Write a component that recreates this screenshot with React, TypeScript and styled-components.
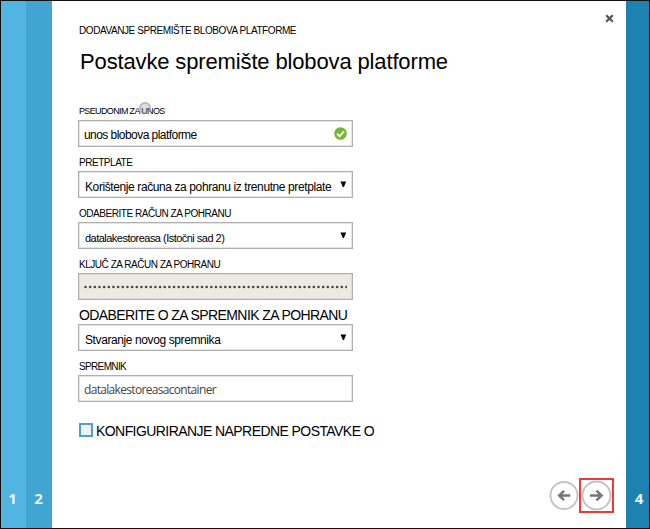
import React from "react";
import styled, { createGlobalStyle } from "styled-components";

const GlobalStyle = createGlobalStyle`
  * { box-sizing: border-box; }
  body { margin: 0; background: #fff; color: #000; font-family: "Liberation Sans", Arial, sans-serif; }
`;

const Dialog = styled.div`
  display: flex;
  width: 650px;
  height: 529px;
  border: 1px solid #111;
  overflow: hidden;
  background: #fff;
`;

const StepRail = styled.div<{ $width: number; $color: string; $shift?: number }>`
  display: flex;
  flex: none;
  align-items: flex-end;
  justify-content: center;
  width: ${(p) => p.$width}px;
  padding: 0 ${(p) => Math.max(0, -(p.$shift ?? 0))}px 19px ${(p) => Math.max(0, p.$shift ?? 0)}px;
  background: ${(p) => p.$color};
  color: #e9f6fc;
  font: bold 15px/22px "Open Sans", sans-serif;
`;

const Content = styled.main`
  position: relative;
  display: flex;
  flex: 1;
  flex-direction: column;
  padding: 23px 0 0 26px;
`;

const CloseButton = styled.button`
  position: absolute;
  top: 13px;
  right: 12px;
  display: flex;
  padding: 0;
  border: 0;
  background: none;
`;

const Eyebrow = styled.div`
  height: 14px;
  padding-left: 1px;
  font-size: 10px;
  letter-spacing: -0.42px;
  line-height: 14px;
  white-space: nowrap;
`;

const Title = styled.h1`
  margin: 10px 0 0 2px;
  height: 28px;
  font-size: 22px;
  font-weight: 400;
  letter-spacing: -0.14px;
  line-height: 28px;
  white-space: nowrap;
`;

const Form = styled.form`
  display: flex;
  flex-direction: column;
  margin-top: 20px;
`;

const Field = styled.div`
  display: flex;
  flex-direction: column;
  width: 275px;
  height: 51px;
`;

const Label = styled.label<{ $size?: number; $spacing?: number; $lift?: number }>`
  position: relative;
  display: flex;
  align-items: flex-end;
  height: 24px;
  padding: 0 0 ${(p) => p.$lift ?? 2}px 1px;
  font-size: ${(p) => p.$size ?? 10}px;
  letter-spacing: ${(p) => p.$spacing ?? -0.46}px;
  line-height: 12px;
  white-space: nowrap;
`;

const HelpMark = styled.span`
  position: absolute;
  left: 61px;
  top: 6px;
  width: 12px;
  height: 12px;
  border: 2px solid rgba(145, 145, 145, 0.5);
  border-radius: 50%;
  background: rgba(150, 150, 150, 0.3);
`;

const Box = styled.div<{ $disabled?: boolean }>`
  display: flex;
  align-items: center;
  justify-content: space-between;
  height: 27px;
  padding: 0 5px 0 5px;
  border: 1px solid #b0b0b0;
  box-shadow: inset 0 0 0 0.5px #ccc;
  background: ${(p) => (p.$disabled ? "#ebebe4" : "#fff")};
`;

const Value = styled.span<{ $size?: number; $spacing?: number; $indent?: number; $drop?: number }>`
  padding: ${(p) => p.$drop ?? 4}px 0 0 ${(p) => p.$indent ?? 1}px;
  font-size: ${(p) => p.$size ?? 12}px;
  letter-spacing: ${(p) => p.$spacing ?? -0.4}px;
  line-height: 16px;
  white-space: nowrap;
`;

const ContainerName = styled.span`
  padding-top: 2px;
  color: #444;
  font: 12px/16px "Open Sans", sans-serif;
  letter-spacing: -0.68px;
`;

const OptionRow = styled.div`
  display: flex;
  align-items: center;
  height: 16px;
  margin-top: 20px;
  font-size: 14px;
  letter-spacing: -0.57px;
  line-height: 16px;
  white-space: nowrap;
`;

const OptionText = styled.span`
  padding-top: 2px;
`;

const Checkbox = styled.span`
  width: 14px;
  height: 14px;
  margin: 0 3px 0 1px;
  border: 2px solid #4f9fcb;
  background: #f1f1f1;
`;

const Pager = styled.nav`
  position: absolute;
  right: 12px;
  bottom: 15px;
  display: flex;
  align-items: center;
`;

const PagerButton = styled.button<{ $highlighted?: boolean }>`
  display: flex;
  align-items: center;
  justify-content: center;
  width: ${(p) => (p.$highlighted ? 35 : 30)}px;
  height: 35px;
  padding: 0;
  border: ${(p) => (p.$highlighted ? "2px solid #ec3b3b" : "0")};
  background: none;
`;

const Arrow = ({ back }: { back?: boolean }) => (
  <svg width="31" height="31" viewBox="0 0 31 31" fill="none">
    <circle cx="15.5" cy="15.5" r="14" stroke="#c4c4c4" strokeWidth="2" />
    <path
      d={back ? "M22 15.5H11M15.6 10.6L10.4 15.5L15.6 20.4" : "M9 15.5H20M15.4 10.6L20.6 15.5L15.4 20.4"}
      stroke="#777"
      strokeWidth="2.5"
    />
  </svg>
);

const Caret = () => (
  <svg width="7" height="7" viewBox="0 0 7 7">
    <path d="M0.5 0.5H6.2L3.9 6H2.8Z" fill="#000" />
  </svg>
);

const Valid = () => (
  <svg width="13" height="13" viewBox="0 0 13 13" fill="none">
    <circle cx="6.5" cy="6.5" r="6.3" fill="#70b92b" />
    <path d="M3.1 6.6L5.6 9.2L10 4.3" stroke="#fff" strokeWidth="2" />
  </svg>
);

const KeyDots = () => (
  <svg width="263" height="4" viewBox="0 0 263 4">
    <path d="M1.5 2H263" stroke="#45454b" strokeWidth="2.6" strokeLinecap="round" strokeDasharray="0.01 4.65" />
  </svg>
);

export default function App() {
  return (
    <>
      <GlobalStyle />
      <Dialog>
        <StepRail $width={25} $color="#52b4e0" $shift={-2}>1</StepRail>
        <StepRail $width={26} $color="#42a4d0" $shift={-1}>2</StepRail>
        <Content>
          <CloseButton aria-label="Zatvori">
            <svg width="9" height="9" viewBox="0 0 9 9">
              <path d="M1.2 1.2L7.8 7.8M7.8 1.2L1.2 7.8" stroke="#555" strokeWidth="2.2" />
            </svg>
          </CloseButton>
          <Eyebrow>DODAVANJE SPREMIŠTE BLOBOVA PLATFORME</Eyebrow>
          <Title>Postavke spremište blobova platforme</Title>
          <Form>
            <Field>
              <Label $size={9} $spacing={-0.64} $lift={3}>
                PSEUDONIM ZA UNOS
                <HelpMark />
              </Label>
              <Box>
                <Value $spacing={-0.55} $indent={0} $drop={3}>unos blobova platforme</Value>
                <Valid />
              </Box>
            </Field>
            <Field>
              <Label>PRETPLATE</Label>
              <Box>
                <Value>Korištenje računa za pohranu iz trenutne pretplate</Value>
                <Caret />
              </Box>
            </Field>
            <Field>
              <Label>ODABERITE RAČUN ZA POHRANU</Label>
              <Box>
                <Value $size={11} $spacing={-0.52}>datalakestoreasa (Istočni sad 2)</Value>
                <Caret />
              </Box>
            </Field>
            <Field>
              <Label>KLJUČ ZA RAČUN ZA POHRANU</Label>
              <Box $disabled>
                <KeyDots />
              </Box>
            </Field>
            <Field>
              <Label $size={14} $spacing={-0.6} $lift={3}>ODABERITE O ZA SPREMNIK ZA POHRANU</Label>
              <Box>
                <Value>Stvaranje novog spremnika</Value>
                <Caret />
              </Box>
            </Field>
            <Field>
              <Label $spacing={-0.65}>SPREMNIK</Label>
              <Box>
                <ContainerName>datalakestoreasacontainer</ContainerName>
              </Box>
            </Field>
            <OptionRow>
              <Checkbox />
              <OptionText>KONFIGURIRANJE NAPREDNE POSTAVKE O</OptionText>
            </OptionRow>
          </Form>
          <Pager>
            <PagerButton aria-label="Natrag">
              <Arrow back />
            </PagerButton>
            <PagerButton $highlighted aria-label="Dalje">
              <Arrow />
            </PagerButton>
          </Pager>
        </Content>
        <StepRail $width={23} $color="#1e82b0" $shift={3}>4</StepRail>
      </Dialog>
    </>
  );
}
